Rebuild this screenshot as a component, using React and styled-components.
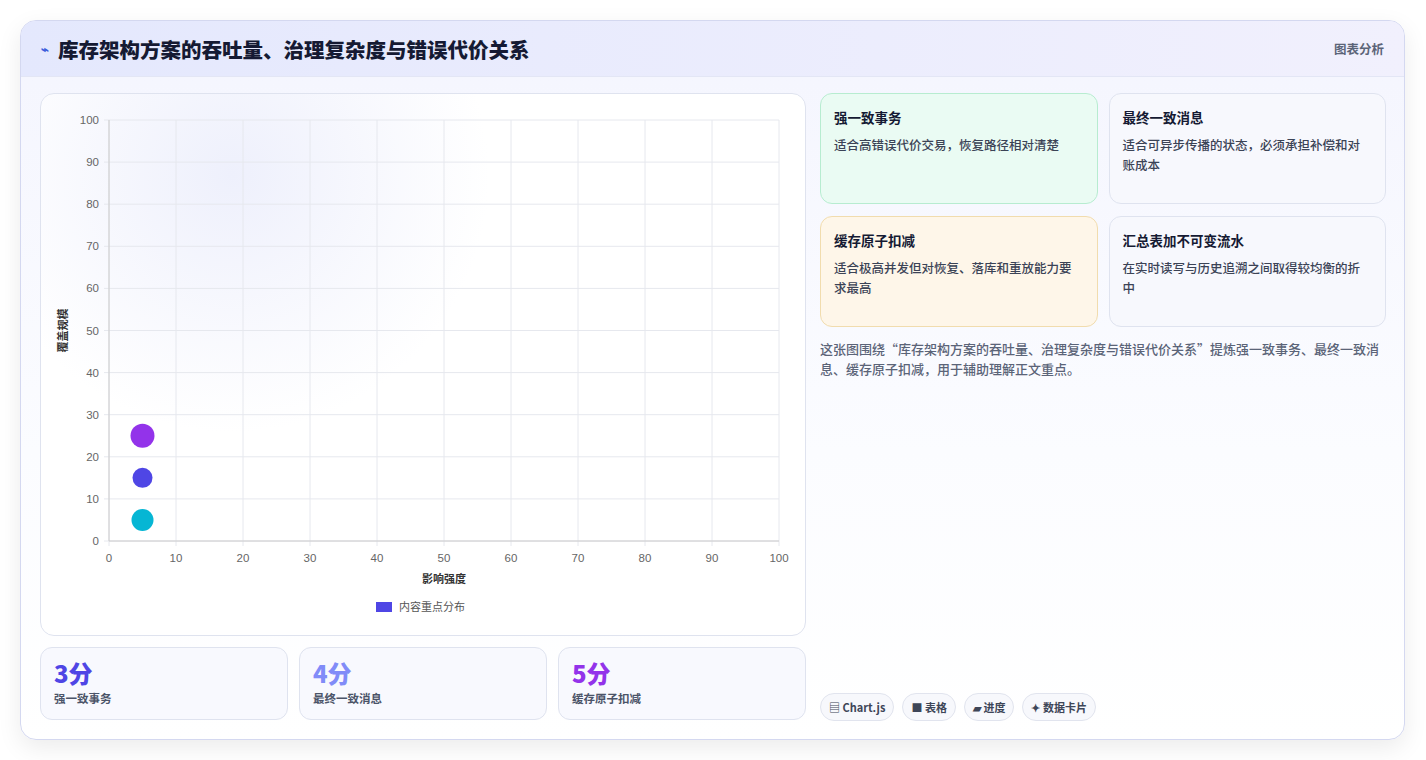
import React from "react";
import styled, { createGlobalStyle } from "styled-components";

const G = createGlobalStyle`
  body{margin:0;background:#fff;font-family:"Noto Sans CJK SC","Noto Sans",sans-serif;}
`;
const Page = styled.div`padding:20px 21px 20px 20px;height:760px;box-sizing:border-box;`;
const Card = styled.div`
  border:1px solid #d4d8f0;border-radius:16px;overflow:hidden;height:720px;box-sizing:border-box;
  background:linear-gradient(180deg,#f4f5fe 0%,#fbfcff 60%,#fff 100%);
  box-shadow:0 8px 24px rgba(0,0,0,0.08);display:flex;flex-direction:column;`;
const Header = styled.div`
  height:55px;flex:none;display:flex;align-items:center;justify-content:space-between;
  padding:0 20px;background:linear-gradient(90deg,#e4e8fd,#f1f0fd);border-bottom:1px solid #e3e6f5;`;
const Title = styled.h1`margin:0;font-size:20.5px;font-weight:800;color:#151a33;display:flex;align-items:center;gap:9px;
  span{color:#3b5bdb;font-size:13px;}`;
const Tag = styled.div`font-size:12.5px;font-weight:700;color:#5b6478;`;
const Body = styled.div`flex:1;display:grid;grid-template-columns:766px 1fr;gap:14px;padding:16px 18px 18px 19px;`;
const Left = styled.div`display:flex;flex-direction:column;gap:11px;`;
const ChartBox = styled.div`height:543px;box-sizing:border-box;border:1px solid #dfe3ef;border-radius:14px;
  background:radial-gradient(circle at 25% 15%,#eef0fc 0%,#fff 35%);`;
const Stats = styled.div`display:grid;grid-template-columns:repeat(3,1fr);gap:11px;`;
const Stat = styled.div`height:73px;box-sizing:border-box;border:1px solid #dfe3ef;border-radius:12px;background:#f8f9fe;padding:10px 13px;`;
const Num = styled.div`font-size:24px;font-weight:800;color:${p=>p.c};line-height:30px;`;
const Lbl = styled.div`font-size:11.5px;color:#4b5468;font-weight:600;margin-top:2px;`;
const Right = styled.div`display:flex;flex-direction:column;`;
const Grid = styled.div`display:grid;grid-template-columns:1fr 1fr;gap:12px 11px;`;
const Info = styled.div`height:111px;box-sizing:border-box;border:1px solid ${p=>p.b};background:${p=>p.bg};border-radius:12px;padding:13px 13px;`;
const IT = styled.div`font-size:13.5px;font-weight:700;color:#151a33;margin-bottom:8px;`;
const ID = styled.div`font-size:12.5px;color:#3b4356;line-height:20px;font-weight:500;`;
const Note = styled.p`margin:12px 0 0;font-size:13px;line-height:20px;color:#5b6478;font-weight:500;`;
const Chips = styled.div`margin-top:auto;display:flex;gap:8px;`;
const Chip = styled.div`border:1px solid #e1e4ee;border-radius:15px;background:#f7f8fc;font-size:11px;font-weight:700;color:#3e4658;padding:5px 8px;`;

const X0=68,X1=738,Y0=447,Y1=26;
const sx=v=>X0+(X1-X0)*v/100, sy=v=>Y0-(Y0-Y1)*v/100;
const ticks=[0,10,20,30,40,50,60,70,80,90,100];
function Chart(){
  return <svg width="764" height="541" style={{display:"block"}} fontFamily="'Liberation Sans',sans-serif">
    {ticks.map(t=><g key={t}>
      <line x1={sx(t)} x2={sx(t)} y1={Y1} y2={Y0+5} stroke="#e6e8ee"/>
      <line x1={X0-5} x2={X1} y1={sy(t)} y2={sy(t)} stroke="#e6e8ee"/>
      <text x={X0-10} y={sy(t)+4} fontSize="11.5" fill="#666" textAnchor="end">{t}</text>
      <text x={sx(t)} y={Y0+21} fontSize="11.5" fill="#666" textAnchor="middle">{t}</text>
    </g>)}
    <line x1={X0} x2={X0} y1={Y1} y2={Y0} stroke="#ccc"/>
    <line x1={X0} x2={X1} y1={Y0} y2={Y0} stroke="#ccc"/>
    <text x={sx(50)} y={Y0+42} fontSize="11" fill="#333" textAnchor="middle" fontFamily="Noto Sans CJK SC" fontWeight="600">影响强度</text>
    <text transform={`translate(26,${sy(50)}) rotate(-90)`} fontSize="11" fill="#333" textAnchor="middle" fontFamily="Noto Sans CJK SC" fontWeight="600">覆盖规模</text>
    <circle cx={sx(5)} cy={sy(25)} r="12" fill="#9333ea"/>
    <circle cx={sx(5)} cy={sy(15)} r="10" fill="#4f46e5"/>
    <circle cx={sx(5)} cy={sy(5)} r="11" fill="#06b6d4"/>
    <rect x="335" y="508" width="16" height="10" fill="#4f46e5"/>
    <text x="358" y="517" fontSize="11" fill="#555" fontFamily="Noto Sans CJK SC">内容重点分布</text>
  </svg>;
}

export default function App(){
  return <Page><G/><Card>
    <Header><Title><span>⌁</span>库存架构方案的吞吐量、治理复杂度与错误代价关系</Title><Tag>图表分析</Tag></Header>
    <Body>
      <Left>
        <ChartBox><Chart/></ChartBox>
        <Stats>
          <Stat><Num c="#4f46e5">3分</Num><Lbl>强一致事务</Lbl></Stat>
          <Stat><Num c="#818cf8">4分</Num><Lbl>最终一致消息</Lbl></Stat>
          <Stat><Num c="#9333ea">5分</Num><Lbl>缓存原子扣减</Lbl></Stat>
        </Stats>
      </Left>
      <Right>
        <Grid>
          <Info b="#b7ecd0" bg="#eafbf3"><IT>强一致事务</IT><ID>适合高错误代价交易，恢复路径相对清楚</ID></Info>
          <Info b="#dfe3ef" bg="#f7f8fd"><IT>最终一致消息</IT><ID>适合可异步传播的状态，必须承担补偿和对账成本</ID></Info>
          <Info b="#f1dcae" bg="#fef6e9"><IT>缓存原子扣减</IT><ID>适合极高并发但对恢复、落库和重放能力要求最高</ID></Info>
          <Info b="#dfe3ef" bg="#f7f8fd"><IT>汇总表加不可变流水</IT><ID>在实时读写与历史追溯之间取得较均衡的折中</ID></Info>
        </Grid>
        <Note>这张图围绕“库存架构方案的吞吐量、治理复杂度与错误代价关系”提炼强一致事务、最终一致消息、缓存原子扣减，用于辅助理解正文重点。</Note>
        <Chips><Chip>▤ Chart.js</Chip><Chip>■ 表格</Chip><Chip>▰ 进度</Chip><Chip>✦ 数据卡片</Chip></Chips>
      </Right>
    </Body>
  </Card></Page>;
}
